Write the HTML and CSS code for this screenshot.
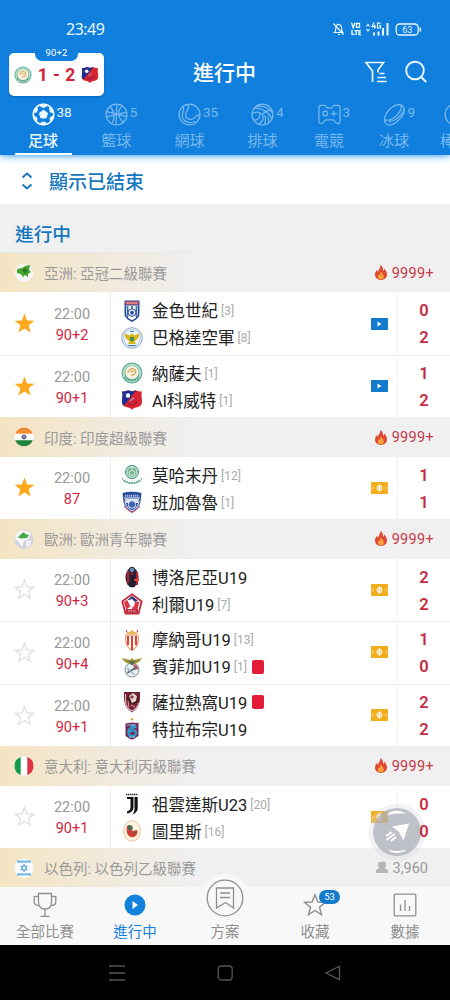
FILE: index.html
```html
<!DOCTYPE html>
<html lang="zh-Hant">
<head>
<meta charset="utf-8">
<title>進行中</title>
<link rel="stylesheet" href="styles.css">
</head>
<body>
<svg class="defs" width="0" height="0">
  <symbol id="star-on" viewBox="0 0 22 22"><path fill="#fca91c" d="M11 .6l2.7 7.2 7.7.3-6 4.8 2 7.6L11 16.3l-6.4 4.2 2-7.6-6-4.8 7.7-.3z"/></symbol>
  <symbol id="star-off" viewBox="0 0 22 22"><path fill="none" stroke="#dcdcdc" stroke-width="1.2" d="M11 1.400l2.500 6.900 7.200.3-5.700 4.500 2 7L11 16.100l-6 4 2-7-5.700-4.500 7.200-.3z"/></symbol>
  <symbol id="fire" viewBox="0 0 12 15"><path fill="#df4b35" d="M5.500 0C8.300 2 8 4.300 8.300 5.700c.8-.5.9-1.400.9-2.200C10.900 5 12 7.600 12 9.500c0 3.200-2.700 5.500-6 5.500s-6-2.300-6-5.500c0-2.100 1-3.600 2.200-4.700 0 .9.300 1.700.9 2.200C3.200 4.500 5.500 3 5.500 0z"/><path fill="#f9a43d" d="M6.300 6.500c.3 2 2.500 2.700 2.500 5 0 1.700-1.200 3-2.900 3S3 13.400 3 11.700c0-1.300.7-2.200 1.300-2.800.1.800.4 1.200.9 1.400C5 9 5.300 7.500 6.300 6.500z"/></symbol>
  <symbol id="video" viewBox="0 0 17 12"><rect width="17" height="12" fill="#147acb"/><path fill="#fff" d="M6.500 3.500l4 2.500-4 2.500z"/></symbol>
  <symbol id="pitch" viewBox="0 0 17 12"><rect width="17" height="12" rx=".6" fill="#f2ad1b"/><circle cx="8.500" cy="6" r="2.500" fill="#f8cf77" stroke="#fff"/><path stroke="#fff" stroke-width=".9" d="M8.500 2v8"/><path fill="none" stroke="#fbe0a6" d="M1 4.500l1.500 1.500L1 7.500M16 4.500L14.500 6 16 7.500"/></symbol>
  <symbol id="nasaf" viewBox="0 0 22 22"><circle cx="11" cy="11" r="10.500" fill="#5fb39b"/><circle cx="11" cy="11" r="9.300" fill="#b9dcc8"/><circle cx="11" cy="11" r="7.300" fill="#62b29a"/><circle cx="11" cy="10.500" r="6.600" fill="#fbf3df"/><path d="M7 11c0-3 3-5 5.500-4 2.500.5 2.500 3 1.500 4.500-1 2-3 1-4 2.500" fill="none" stroke="#d4b16a" stroke-width="1.500"/><path d="M9 10l4-1" stroke="#c79746"/><path d="M4 15c3 4.500 10.500 5 14 0" stroke="#438d79" stroke-dasharray="1.200 1" fill="none" stroke-width="1.500"/></symbol>
  <symbol id="kuwait" viewBox="0 0 22 22"><path fill="#d9252f" d="M1 2.500c3 .5 4-1 6-1 2 0 3 .8 4 .8s2-.8 4-.8c2 0 3 1.500 6 1-1 3-.3 5 0 9 .3 4-1.500 6-4 6.500-3 .5-5 1-6 3-1-2-3-2.500-6-3-2.500-.5-4.300-2.500-4-6.500.3-4 1-6 0-9z"/><path fill="#1d2f8f" d="M1 2.500c3 .5 4-1 6-1 2 0 3 .8 4 .8s2-.8 4-.8L3 16.500C.7 15 .8 13 1 11.500c.3-4 1-6 0-9z"/><circle cx="7" cy="6.500" r="2.200" fill="#fff"/><path d="M7 15.500c4 1 8-1 9-3" stroke="#a7203c" stroke-width="2" fill="none"/><path d="M9 12l4-3" stroke="#9a9de0" stroke-width="1.200"/></symbol>
  <symbol id="gold" viewBox="0 0 22 22"><path fill="#284d98" d="M3.500.5h15V14c0 4-4 6-7.500 8-3.500-2-7.500-4-7.500-8z"/><path fill="#fff" d="M5 5.500h12V14c0 3-3 4.500-6 6.200C8 18.500 5 17 5 14z"/><path fill="#d8545c" d="M4.500 1.500h13v3h-13z"/><path stroke="#fff" stroke-width=".7" d="M6 3h10" stroke-dasharray="1.500 .8"/><path stroke="#4167ac" stroke-width="1.800" d="M6.500 6v11M15.500 6v11M11 6v3"/><circle cx="11" cy="12.500" r="3.800" fill="#e9edf6" stroke="#284d98"/><path fill="#284d98" d="M11 10.500l2 1.500-.8 2.400H9.800L9 12z"/></symbol>
  <symbol id="airforce" viewBox="0 0 22 22"><circle cx="11" cy="11" r="10.300" fill="#eff5fb" stroke="#8aa9c9"/><circle cx="11" cy="11" r="8.500" fill="none" stroke="#b4cbe1"/><path fill="#d7b51c" d="M3.300 6.500l5.500 2L11 6l2.200 2.500 5.500-2c-.7 5-3 6.500-5.200 7.500L15 17H7l1.500-3C6.300 13 4 11.500 3.300 6.500z"/><circle cx="11" cy="12" r="2.200" fill="#438850"/><path stroke="#4b77b2" d="M7 18.500h8M9 4.500h4"/></symbol>
  <symbol id="mohammedan" viewBox="0 0 22 22"><circle cx="11" cy="8" r="6.600" fill="#a9d8bf" stroke="#529b7d"/><circle cx="11" cy="8" r="4.300" fill="#73af90"/><path fill="none" stroke="#d8efe1" d="M8 8l3-2 3 2-1 3H9zM11 2v4M4 14c4 3 10 3 14 0"/><path fill="none" stroke="#8cc5a7" stroke-width="1.400" d="M1 14c2 4.500 6 5 10 5s8-.5 10-5"/><path stroke="#6eb192" stroke-width="2" stroke-dasharray="1.500 1" d="M3 16.500c4 3.500 12 3.500 16 0" fill="none"/></symbol>
  <symbol id="bengaluru" viewBox="0 0 22 22"><path fill="#284c9c" d="M1.500 2c6-1.800 13-1.800 19 0-.5 3-.5 6-1 9-.8 5-5 8-8.500 10.500C7.500 19 3.300 16 2.500 11c-.5-3-.5-6-1-9z"/><path fill="none" stroke="#fff" d="M3 7h16M4 10c0 5 4 8 7 10 3-2 7-5 7-10"/><path stroke="#a9bce5" stroke-width="2" stroke-dasharray="1.300 .7" d="M4 4.700h14"/><path fill="#dbe4f6" d="M4 8h14l-1 4H5z"/><circle cx="11" cy="13.500" r="3.800" fill="#3f63b2" stroke="#fff" stroke-width=".8"/><path d="M3 15c2 3 5 5 8 6.500 3-1.500 6-3.500 8-6.500" fill="none" stroke="#d84556"/></symbol>
  <symbol id="bologna" viewBox="0 0 22 22"><ellipse cx="11" cy="11.500" rx="6.500" ry="10" fill="#232339"/><path stroke="#b72231" stroke-width="2.200" d="M7 5v12M11 5.500v15M16 6v13"/><circle cx="11" cy="4" r="2.800" fill="#718cb8" stroke="#222"/><path fill="#201d2d" d="M10 9h4v12h-4z"/><path stroke="#df434c" stroke-width="2" d="M13 14h5"/></symbol>
  <symbol id="lille" viewBox="0 0 22 22"><path fill="#fff" stroke="#c82a3c" stroke-width="1.800" d="M11 1.300l9.700 7-3.200 12.200h-13L1.300 8.300z"/><path fill="#263a79" d="M11 3l6 4.500-4 2-3-3-4 1z"/><path fill="#df3348" d="M3 9l3-2 4 6-4 3H5zM13 9l5.500-.5L16.500 16H11z"/><path fill="#fff" d="M7 8l4-2 3 3-1 5-2-2-2 1z"/><path fill="#b63348" d="M5 16h12v4H5z"/><path stroke="#efc4ca" d="M7 18h8" stroke-dasharray="1.500 1"/></symbol>
  <symbol id="monaco" viewBox="0 0 22 22"><path fill="#e6b84b" d="M6 5L5 2l3 1.500L11 1l3 2.500L17 2l-1 3z"/><path fill="#cd3d33" d="M5 1h1v2H5zm11 0h1v2h-1z"/><path fill="#fff3df" stroke="#d98b5c" d="M5 6h12c1 7 0 12-6 15.500C5 18 4 13 5 6z"/><path stroke="#d43b3d" stroke-width="1.900" d="M7 7v9M11 7v14M15 7v9"/></symbol>
  <symbol id="benfica" viewBox="0 0 22 22"><circle cx="11" cy="14" r="7" fill="#e7eef1" stroke="#819096"/><path fill="#d2555a" d="M12 8a6 6 0 015.500 5l-4 1z"/><path stroke="#56727d" stroke-width="2" d="M6 17l10-6"/><path stroke="#9fb0b6" stroke-width="1.200" d="M6 12l8 7"/><path fill="#a59337" d="M1 2l8 2 2-2 2 2 8-2c-2 4-5 5-7 6H8C5 7 2 5 1 2z"/><path fill="#4e7450" d="M7 4l4 1.500L15 4l-3 5h-2z"/></symbol>
  <symbol id="sarajevo" viewBox="0 0 22 22"><path fill="#781d32" d="M3 1h16c0 7 1 15-8 20.500C2 16 3 8 3 1z"/><path fill="none" stroke="#d8bdc4" stroke-width="1.200" d="M4.500 3v7c0 5 2.500 8 6.500 10 4-2 6-4 6.500-8"/><circle cx="12" cy="7.500" r="5.500" fill="#462023"/><path fill="#e8d5d2" d="M8 5l4-3 4 3-1 5-4 2z"/><path fill="#873744" d="M11 4l2 2-2 2-2-2z"/><path stroke="#d7a3ae" d="M7 10l1 6M10 14l4 2"/></symbol>
  <symbol id="trabzon" viewBox="0 0 22 22"><circle cx="11" cy="1.300" r="1.200" fill="#e2a347"/><path fill="#772954" d="M4.500 5.500c2 0 4-1 6.500-1s4.500 1 6.500 0V18c-2 1-4 3-6.500 3.500C8.500 21 6.500 19 4.500 18z"/><path fill="none" stroke="#2d9bca" stroke-width="2.300" d="M15.500 9.500c-4-1.500-8 .5-8 5s6.500 5 7.500 1-5-4-6-1M11.500 6v5"/><path stroke="#7ed0ec" d="M6 7h9M8 19h6"/></symbol>
  <symbol id="juventus" viewBox="0 0 22 22"><path stroke="#333" stroke-width="1.300" stroke-dasharray="1.500 .5" d="M5 1.500h12"/><path fill="#111" d="M6 4h6.500v10c0 3.500-2.500 6-6.500 6.500v-2c2.500-.8 3.500-2 3.500-4.500V6H6zM13.500 4h3.200v11c0 3-2.200 5.500-5.200 6.500 1.500-2 2-3.700 2-6z"/></symbol>
  <symbol id="turris" viewBox="0 0 22 22"><ellipse cx="11" cy="11" rx="8.500" ry="10.300" fill="#fff2de" stroke="#edc4a1"/><path fill="#cf3f38" d="M6 6l3-1c-1 4 1 5 3 6l4-1c2 4-2 8-6 7-4-1-5-6-4-11z"/><path fill="#39704d" d="M7 5l4 .5 1 4-4 1zM12 12l3-1-1 3z"/></symbol>
  <symbol id="i-star" viewBox="0 0 24 24"><path fill="none" stroke="currentColor" stroke-width="1.400" d="M12 1.700l3 7.300 7.500.3-6 5 2 7.400-6.500-4.200-6.500 4.200 2-7.400-6-5L9 9z"/></symbol>
</svg>

<header class="top">
  <div class="status">
    <span class="clock">23:49</span>
    <svg class="status-icons" viewBox="0 0 92 16" fill="none" stroke="#e9f7ff">
      <path d="M1.500 11.500h10M3 11c1-1.500.5-5 1.500-6.500S8 3 9 5s0 4 1.500 6M6 13.500h2M1.500 2.500l10 11" stroke-width="1.200"/>
      <path d="M19.500 1.700l1.700 5 1.700-5M24.500 2.400h3v4h-3zM20 9v4.400h2.500M22.500 9.600H26M24.200 10v4M29 9.600h-2v4h2M27 11.500h1.800" stroke-width="1.400"/>
      <path d="M34.500 5.500l1.500-2 1.500 2M34.500 8l1.500 2L37.500 8" stroke-width="1.200"/>
      <path d="M42 1.500l-2 4.200h3.800M42.800 3.800v4M48.500 2.100h-3V7h3V4.700H47" stroke-width="1.200"/>
      <path d="M42 14.500v-3M46.500 14.500v-4M51 14.500V7M55.500 14.500V2" stroke-width="2"/>
      <rect x="64.200" y="3" width="22" height="11" rx="3.500" stroke-width="1.300"/><path d="M88.300 6.500v4" stroke-width="1.500"/>
      <text class="battery" x="75.200" y="12" text-anchor="middle">63</text>
    </svg>
  </div>
  <div class="titlebar">
    <div class="live-card">
      <span class="live-min">90+2</span>
      <div class="live-score"><svg><use href="#nasaf"/></svg><b>1 - 2</b><svg><use href="#kuwait"/></svg></div>
    </div>
    <h1>進行中</h1>
    <div class="actions">
      <svg viewBox="0 0 24 24" fill="none" stroke="#e9f7ff" stroke-width="1.700"><path d="M8.500 22V11L2 2.500h17.500L14 10v2.500M15.500 13.500h5M13.500 17.500h8.500M13 21.500h9.500"/></svg>
      <svg viewBox="0 0 24 24" fill="none" stroke="#e9f7ff" stroke-width="1.900"><circle cx="11" cy="10.500" r="8.800"/><path d="M17.200 17l5 5"/></svg>
    </div>
  </div>
  <nav class="sports">
    <a class="on"><span class="ico"><svg viewBox="0 0 24 24"><circle cx="12" cy="12" r="10.700" fill="none" stroke="currentColor" stroke-width="1.600"/><path fill="currentColor" d="M12 7.500l4.300 3.100-1.600 5H9.300l-1.600-5zM7.500 2.500L12 4.800l4.500-2.300L12 1zM1.500 10l3.500-.7L5.700 5 2.500 7zM22.500 10L19 9.300 18.300 5l3.200 2zM4.500 20l.8-4.300L1.500 13l1 4zM19.500 20l-.8-4.300 3.800-2.700-1 4zM9 22.500l1-2.500h4l1 2.500z" stroke="currentColor"/></svg><i>38</i></span>足球</a>
    <a><span class="ico"><svg viewBox="0 0 24 24"><g class="line"><circle cx="12" cy="12" r="10.900"/><path d="M12.500 1.500L11.500 23M1.500 14.500L22.500 9.500M5 4c5 4 6 11 2.500 17M18 3c-5 4-5 13 1.500 17M2 9l20 5"/></g></svg><i>5</i></span>籃球</a>
    <a><span class="ico"><svg viewBox="0 0 24 24"><g class="line"><circle cx="12" cy="12" r="10.900"/><path d="M10 1.500c4 4-3 7-2 12 1 4.500 6.500 4.500 9 2 2-2 2.500-3.500 5.500-2.500M5.500 4c2 4-3 7-.5 12 2 4.500 8 5.500 13 3"/></g></svg><i>35</i></span>網球</a>
    <a><span class="ico"><svg viewBox="0 0 24 24"><g class="line"><circle cx="12" cy="12" r="10.900"/><path d="M3 6c8-2 14 3 19 10M5.500 3.500c6-1 13 1 17 7M12 12c3-4 6-5 10-4M12 12c-4-3-6-3-10.500-1M12 12c2 4 0 8-4 10M9 10c1 5-1 8-6 8M14 13c2 3 1 7 0 9.500M17 14c2 2 2 4 1 7"/></g></svg><i>4</i></span>排球</a>
    <a><span class="ico"><svg viewBox="0 0 24 24"><g class="line"><path d="M3 2.500h4c1.500 0 1.500 2.500 3 2.500h4c1.500 0 1.500-2.500 3-2.500h4c1.500 0 2 1 2 3v13c0 2-1 3-2.500 3-3 0-2.500-4-5-4h-7c-2.500 0-2 4-5 4C2 21.500 1 20.500 1 18.500v-13c0-2 .5-3 2-3z"/><circle cx="7.500" cy="11" r="2.500"/><path d="M16.500 8v6M13.500 11h6"/></g></svg><i>3</i></span>電競</a>
    <a><span class="ico"><svg viewBox="0 0 24 24"><g class="line"><path d="M1.500 17C2 9 12 0 18.500 2c2 .5 3 2 3.500 4 1 6-8 17-16 17-2.500 0-4.500-3-4.500-6z"/><path d="M18.500 2C21 7 12 18 4.500 18c-1.500 0-2.500-.3-3-1M22 6c-1 5-9 14-16 13"/></g></svg><i>9</i></span>冰球</a>
    <a><span class="ico"><svg viewBox="0 0 24 24"><g class="line"><circle cx="12" cy="12" r="10.900"/></g></svg><i></i></span>棒球</a>
  </nav>
</header>

<main>
  <div class="toggle"><svg viewBox="0 0 12 18" fill="none" stroke="#1676bd" stroke-width="1.800"><path d="M1.500 5.500L6 1.500l4.500 4M1.500 12.500l4.500 4 4.500-4"/></svg>顯示已結束</div>
  <h2>進行中</h2>

  <div class="league"><svg class="flag" viewBox="0 0 20 20"><circle cx="10" cy="10" r="9" fill="#f7f9f5"/><path fill="#45a32e" d="M3 6l5-1 3-2 5-1-1 5 2 2-3 2v3l-3-2-2 2-2-3-4-1z"/><path fill="#2b7f22" d="M8 7l4-2 2 3-3 3z"/></svg><span>亞洲: 亞冠二級聯賽</span><svg class="fire"><use href="#fire"/></svg><em>9999+</em></div>
  <div class="match"><svg class="star"><use href="#star-on"/></svg><div class="time">22:00<b>90+2</b></div><div class="teams"><p><svg><use href="#gold"/></svg>金色世紀<small>[3]</small></p><p><svg><use href="#airforce"/></svg>巴格達空軍<small>[8]</small></p></div><svg class="media"><use href="#video"/></svg><div class="score"><b>0</b><b>2</b></div></div>
  <div class="match"><svg class="star"><use href="#star-on"/></svg><div class="time">22:00<b>90+1</b></div><div class="teams"><p><svg><use href="#nasaf"/></svg>納薩夫<small>[1]</small></p><p><svg><use href="#kuwait"/></svg>Al科威特<small>[1]</small></p></div><svg class="media"><use href="#video"/></svg><div class="score"><b>1</b><b>2</b></div></div>

  <div class="league"><svg class="flag" viewBox="0 0 20 20"><path fill="#f48a32" d="M1.200 6.700a9.500 9.500 0 0117.600 0z"/><path fill="#fff" d="M1.200 6.700h17.600a9.500 9.500 0 010 6.600H1.200a9.500 9.500 0 010-6.600z"/><path fill="#21853e" d="M1.200 13.300h17.600a9.500 9.500 0 01-17.600 0z"/><circle cx="10" cy="10" r="2" fill="#8a8ead" stroke="#34456f" stroke-width=".8"/></svg><span>印度: 印度超級聯賽</span><svg class="fire"><use href="#fire"/></svg><em>9999+</em></div>
  <div class="match"><svg class="star"><use href="#star-on"/></svg><div class="time">22:00<b>87</b></div><div class="teams"><p><svg><use href="#mohammedan"/></svg>莫哈末丹<small>[12]</small></p><p><svg><use href="#bengaluru"/></svg>班加魯魯<small>[1]</small></p></div><svg class="media"><use href="#pitch"/></svg><div class="score"><b>1</b><b>1</b></div></div>

  <div class="league"><svg class="flag" viewBox="0 0 20 20"><circle cx="10" cy="10" r="9.500" fill="#cfcfe0"/><path fill="#f7f7f4" d="M2 5c4-5 12-5 15 0l-2 5-5 2-2 6-4-6-3-1z"/><path fill="#49a84c" d="M6 6l4-3 1 2 4 1-2 3-6 .5-3-1z"/><path fill="#efefff" d="M12 12l6-1-2 6-4 1z"/></svg><span>歐洲: 歐洲青年聯賽</span><svg class="fire"><use href="#fire"/></svg><em>9999+</em></div>
  <div class="match"><svg class="star"><use href="#star-off"/></svg><div class="time">22:00<b>90+3</b></div><div class="teams"><p><svg><use href="#bologna"/></svg>博洛尼亞U19</p><p><svg><use href="#lille"/></svg>利爾U19<small>[7]</small></p></div><svg class="media"><use href="#pitch"/></svg><div class="score"><b>2</b><b>2</b></div></div>
  <div class="match"><svg class="star"><use href="#star-off"/></svg><div class="time">22:00<b>90+4</b></div><div class="teams"><p><svg><use href="#monaco"/></svg>摩納哥U19<small>[13]</small></p><p><svg><use href="#benfica"/></svg>賓菲加U19<small>[1]</small><i class="red-card"></i></p></div><svg class="media"><use href="#pitch"/></svg><div class="score"><b>1</b><b>0</b></div></div>
  <div class="match"><svg class="star"><use href="#star-off"/></svg><div class="time">22:00<b>90+1</b></div><div class="teams"><p><svg><use href="#sarajevo"/></svg>薩拉熱窩U19<i class="red-card"></i></p><p><svg><use href="#trabzon"/></svg>特拉布宗U19</p></div><svg class="media"><use href="#pitch"/></svg><div class="score"><b>2</b><b>2</b></div></div>

  <div class="league"><svg class="flag" viewBox="0 0 20 20"><circle cx="10" cy="10" r="9.500" fill="#fff"/><path fill="#169b4d" d="M6.700 1.100v17.800a9.500 9.500 0 010-17.800z"/><path fill="#dc3440" d="M13.300 1.100v17.800a9.500 9.500 0 000-17.800z"/></svg><span>意大利: 意大利丙級聯賽</span><svg class="fire"><use href="#fire"/></svg><em>9999+</em></div>
  <div class="match"><svg class="star"><use href="#star-off"/></svg><div class="time">22:00<b>90+1</b></div><div class="teams"><p><svg><use href="#juventus"/></svg>祖雲達斯U23<small>[20]</small></p><p><svg><use href="#turris"/></svg>圖里斯<small>[16]</small></p></div><svg class="media"><use href="#pitch"/></svg><div class="score"><b>0</b><b>0</b></div></div>

  <div class="league quiet"><svg class="flag" viewBox="0 0 20 20"><circle cx="10" cy="10" r="9.500" fill="#fff"/><path stroke="#79b8e6" stroke-width="2.300" d="M3 3.700h14M3 16.300h14"/><path fill="none" stroke="#69addf" stroke-width="1.100" d="M10 6.500l3 5.200H7zM10 13.500L7 8.300h6z"/></svg><span>以色列: 以色列乙級聯賽</span><svg class="fire" viewBox="0 0 12 15"><path fill="#b5b5b5" d="M5 2.500c1-1.500 5-1.500 5 1.500 0 2-1 3-1 4s3 1 3 3v2H0v-2c0-2 3-2 3-3S2 6 2 4s2-2.500 3-1.500z"/></svg><em>3,960</em></div>
</main>

<svg class="fab" viewBox="0 0 60 60"><circle cx="30" cy="30" r="28.500" fill="#d9dae0" opacity=".4"/><circle cx="30" cy="30" r="24" fill="#adb0b9"/><path fill="#fff" d="M25 24.500l17-3-5.500 17-4.500-8.500zM19.500 13c4-5 15-6 19-1-5-1-14 0-19 1zM21 47.500c5 2 14 2 19-.5-4 5-15 5.500-19 .5z"/><path stroke="#fff" stroke-width="1.800" d="M19 34l6-4M19.500 38l8-6M24 39l5-4"/></svg>

<nav class="bottom">
  <a><svg viewBox="0 0 24 26"><g class="line"><path d="M5.500 1.500h13V10c0 4-2 7-6.500 7s-6.500-3-6.500-7zM5.500 4.500H1.200v5c0 2.500 2 4 4.300 4M18.500 4.500h4.300v5c0 2.500-2 4-4.300 4M12 17v7M7.500 24.300h9"/></g></svg>全部比賽</a>
  <a class="on"><svg viewBox="0 0 24 26"><circle cx="12" cy="13" r="10.500" fill="#1481dc"/><path fill="#fff" d="M9.500 9l5.500 4-5.500 4z"/></svg>進行中</a>
  <a class="plan"><svg viewBox="0 0 38 38"><g class="line"><circle cx="19" cy="19" r="17.800"/><path d="M10.500 9h17v20l-8-5.500-9 5.500zM14 14h10M14 18.500h10"/></g></svg>方案</a>
  <a><svg viewBox="0 0 24 26"><use href="#i-star" y="1" width="24" height="24"/></svg>收藏<i class="badge">53</i></a>
  <a><svg viewBox="0 0 24 26"><g class="line"><rect x="1.200" y="2.200" width="21.600" height="21.600" rx="1"/><path d="M7.500 12.500V19M12 8v11M16.500 14v5"/></g></svg>數據</a>
</nav>

<footer class="system"><svg viewBox="0 0 18 18"><path d="M1 2h16M1 9h16M1 16h16"/></svg><svg viewBox="0 0 18 18"><rect x="2.200" y="2" width="14" height="14" rx="3"/></svg><svg viewBox="0 0 18 18"><path d="M15.500 2.200v13.500L2 9z"/></svg></footer>
</body>
</html>
```

FILE: styles.css
```css
* { box-sizing: border-box; }
body {
  margin: 0;
  width: 450px;
  height: 1000px;
  overflow: hidden;
  position: relative;
  display: flex;
  flex-direction: column;
  background: #fff;
  color: #222;
  font-family: Roboto, "Noto Sans CJK TC", sans-serif;
}
.defs { position: absolute; }
h1, h2, p { margin: 0; font-weight: 500; }
i, em { font-style: normal; }
.line { fill: none; stroke: currentColor; stroke-width: 1.3; }

.top {
  height: 155px;
  flex: none;
  background: #107fdd;
  color: #fff;
  box-shadow: 0 1px 7px #3b9af0;
  z-index: 1;
}
.status {
  height: 50px;
  padding: 8px 26px 0 66px;
  display: flex;
  justify-content: space-between;
  align-items: center;
}
.clock { font: 16px/20px "Noto Sans", Roboto, sans-serif; letter-spacing: -.5px; color: #e9f7ff; }
.status-icons { width: 92px; height: 16px; }
.battery { font: 9px Roboto, sans-serif; fill: #e9f7ff; stroke: none; }
.titlebar {
  height: 50px;
  padding: 3px 22px 0 9px;
  display: grid;
  grid-template-columns: 95px 1fr 95px;
}
.live-card {
  height: 43px;
  border-radius: 5px;
  background: #fff;
  display: flex;
  flex-direction: column;
  align-items: center;
  box-shadow: 0 1px 2px #0866b8;
}
.live-min {
  width: 43px;
  height: 8px;
  border-radius: 0 0 7px 7px;
  background: #107fdd;
  font-size: 9.500px;
  line-height: 0;
  text-align: center;
  letter-spacing: .2px;
}
.live-score {
  display: flex;
  align-items: center;
  gap: 6px;
  margin-top: 4px;
  color: #d3223c;
  font-size: 17.500px;
  line-height: 20px;
}
.live-score svg { width: 18px; height: 18px; }
.live-score b { word-spacing: 1px; }
h1 { font-size: 21px; line-height: 40px; text-align: center; padding-left: 12px; }
.actions { display: flex; justify-content: flex-end; align-items: center; gap: 16px; height: 37px; }
.actions svg { width: 24px; height: 24px; }

.sports {
  height: 55px;
  overflow: hidden;
  padding-left: 6.500px;
  display: grid;
  grid-template-columns: 73px 73.500px 73px 73px 60px 70px 52px;
  color: #79b9ef;
}
.sports a {
  display: flex;
  flex-direction: column;
  align-items: center;
  font-size: 15px;
  line-height: 22px;
  white-space: nowrap;
}
.sports .ico { display: grid; grid-template-columns: 18px 23px 18px; height: 30px; padding-bottom: 1px; align-items: center; }
.sports svg { width: 23px; height: 23px; grid-column: 2; }
.sports i { font-size: 13.500px; line-height: 18px; padding-left: 2px; margin-top: -5px; }
.sports .on { color: #effaff; font-weight: 500; }
.sports .on::after { content: ""; width: 57px; height: 2px; background: #fff; margin-top: 1px; }
.sports .on i { font-weight: 400; }

.toggle {
  height: 49px;
  padding: 2px 0 0 21px;
  display: flex;
  align-items: center;
  gap: 16px;
  color: #1676bd;
  font-size: 19px;
  font-weight: 500;
}
.toggle svg { width: 12px; height: 18px; }
h2 {
  height: 49px;
  padding: 13px 15px 0;
  background: #f0f0f0;
  border-bottom: 1px solid #e8e8e8;
  color: #1676bd;
  font-size: 18.700px;
  line-height: 36px;
}
.league {
  height: 39.250px;
  padding: 0 16px 0 14px;
  display: flex;
  align-items: center;
  background: linear-gradient(90deg, #f4e4c2 0, #f1e9da 22%, #f0f0f0 43%);
  color: #999;
  font-size: 14.500px;
}
.league span { margin-left: 10px; flex: 1; }
.flag { width: 20px; height: 20px; }
.fire { width: 12px; height: 15px; margin-right: 5px; }
.league em { color: #c53a48; letter-spacing: .3px; padding-top: 1px; }
.league.quiet { padding-right: 22px; }
.league.quiet em { color: #999; letter-spacing: 0; }

.match {
  height: 62.600px;
  display: grid;
  grid-template-columns: 48px 48px 1fr 26px 53px;
  align-items: center;
  background: #fff;
}
.match + .match { box-shadow: inset 0 1px #ececec; }
.star { width: 21px; height: 21px; justify-self: center; }
.time { color: #999; font-size: 14.500px; line-height: 21px; text-align: center; padding-top: 3px; }
.time b { display: block; color: #cf2640; font-weight: 400; }
.teams {
  height: 100%;
  margin-left: 14px;
  padding: 6px 0 0 10px;
  border-left: 1px solid #ececec;
}
.teams p {
  height: 27px;
  display: flex;
  align-items: center;
  font-size: 16.500px;
  font-weight: 400;
  line-height: 27px;
  white-space: nowrap;
}
.teams svg { width: 22px; height: 22px; margin: -2px 9px 0 0; }
.teams small { color: #aaa; font-size: 12px; margin-left: 3px; }
.red-card { width: 12px; height: 14px; border-radius: 2px; background: #e31c37; margin: -2px 0 0 5px; }
.media { width: 17px; height: 12px; }
.score {
  height: 100%;
  padding-top: 5px;
  border-left: 1px solid #f4f4f4;
  text-align: center;
  color: #c62c43;
  font-size: 16.500px;
  line-height: 27px;
}
.score b { display: block; font-weight: 600; position: relative; z-index: 2; }

.fab { position: absolute; left: 367px; top: 802px; width: 60px; height: 60px; opacity: .78; }

.bottom {
  position: absolute;
  top: 887px;
  left: 0;
  width: 450px;
  height: 58px;
  background: #f8f8f8;
  color: #8f8f8f;
  display: grid;
  grid-template-columns: repeat(5, 1fr);
}
.bottom a {
  position: relative;
  z-index: 0;
  height: 58px;
  padding-bottom: 2px;
  display: flex;
  flex-direction: column;
  align-items: center;
  justify-content: flex-end;
  font-size: 14.500px;
  line-height: 20px;
}
.bottom svg { width: 24px; height: 26px; flex: none; margin-bottom: 5px; }
.bottom .on { color: #1481dc; }
.bottom .plan svg { width: 38px; height: 38px; margin-bottom: 6px; }
.plan::before {
  content: "";
  position: absolute;
  z-index: -1;
  left: 21px;
  top: -13px;
  width: 48px;
  height: 48px;
  border-radius: 50%;
  background: #f8f8f8;
}
.badge {
  position: absolute;
  left: 49px;
  top: 3px;
  width: 21px;
  height: 14px;
  border-radius: 7px;
  background: #147acb;
  color: #fff;
  font-size: 9.500px;
  line-height: 14px;
  text-align: center;
}
.system {
  position: absolute;
  top: 945px;
  left: 0;
  width: 450px;
  height: 55px;
  padding: 0 63px;
  background: #000;
  display: grid;
  grid-template-columns: repeat(3, 1fr);
  place-items: center;
}
.system svg { width: 18px; height: 18px; fill: none; stroke: #555; stroke-width: 1.300; }
```
